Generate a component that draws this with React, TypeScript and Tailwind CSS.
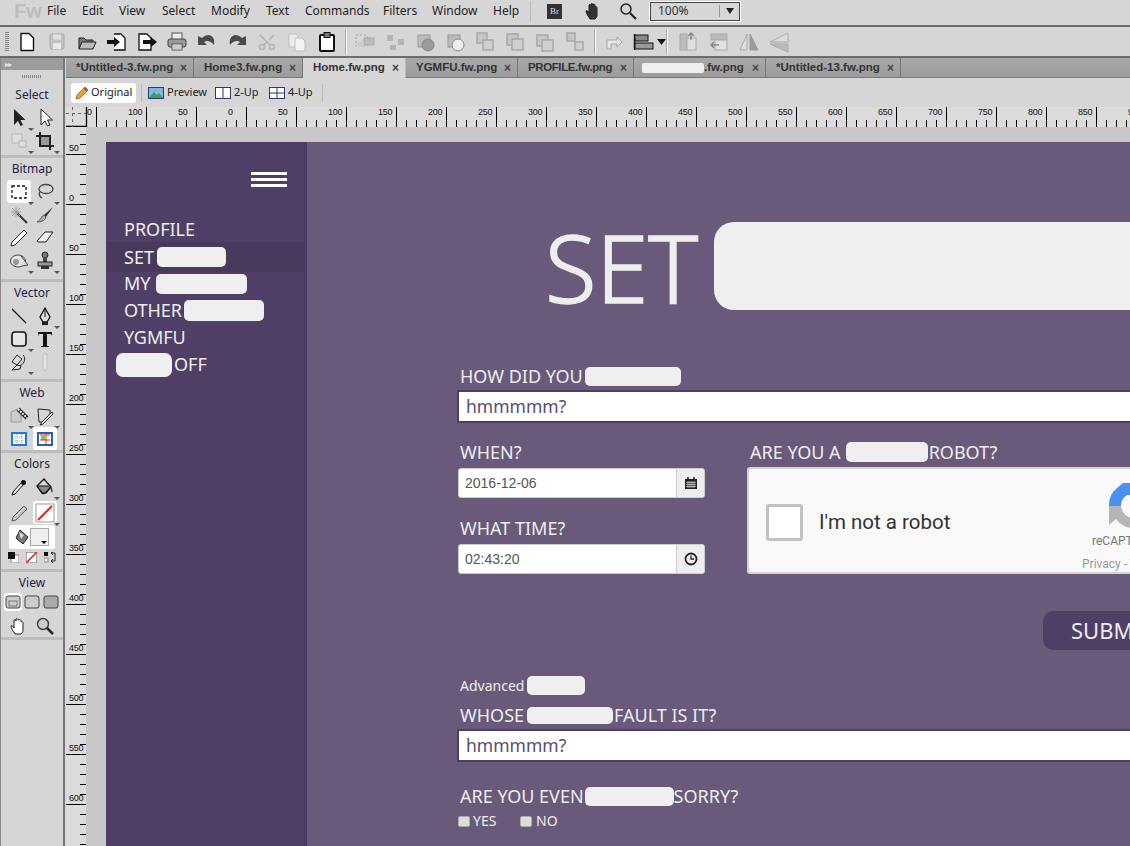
import React from "react";
import { Scissors } from "lucide-react";

const ui = "font-['Noto_Sans','Open_Sans',sans-serif]";

type P = { children: React.ReactNode; s?: number; vb?: number };
const Svg = ({ children, s = 24, vb = 24 }: P) => (
  <svg width={s} height={s} viewBox={`0 0 ${vb} ${vb}`} className="block shrink-0">{children}</svg>
);

const Page = ({ fill = "#fff", stroke = "#111" }: { fill?: string; stroke?: string }) => (
  <path d="M6 3.500h8l4.500 4.500v12.500h-12.500z" fill={fill} stroke={stroke} strokeWidth="1.400" strokeLinejoin="round" />
);
const Ov = ({ a, b, c = "#a8a8a8", f1 = "#c6c6c6", f2 = "#d0d0d0" }: { a: number[]; b: number[]; c?: string; f1?: string; f2?: string }) => (
  <Svg>
    <rect x={a[0]} y={a[1]} width={a[2]} height={a[2]} fill={f1} stroke={c} strokeWidth="1.500" />
    <rect x={b[0]} y={b[1]} width={b[2]} height={b[2]} fill={f2} stroke={c} strokeWidth="1.500" />
  </Svg>
);

const toolbarIcons: (React.ReactNode | number)[] = [
  <Svg><Page /></Svg>,
  <Svg><rect x="5" y="4" width="14" height="15" rx="1.500" fill="#c2c2c2" stroke="#aaa" /><rect x="8" y="4.500" width="8" height="5" fill="#e2e2e2" /><rect x="8" y="13" width="8" height="6" fill="#e8e8e8" /></Svg>,
  <Svg><path d="M4 19V8h5l2 2h7v3" fill="#777" stroke="#222" /><path d="M4 19l3-7h14l-3 7z" fill="#bcbcbc" stroke="#222" strokeLinejoin="round" /></Svg>,
  <Svg><path d="M9 4h7l4 4v12H9" fill="#fff" stroke="#111" strokeWidth="1.300" /><path d="M2 10h7V7l6 5-6 5v-3H2z" fill="#111" /></Svg>,
  <Svg><path d="M4 4h8l4 4v12H4z" fill="#fff" stroke="#111" strokeWidth="1.300" /><path d="M8 10h8V7l6 5-6 5v-3H8z" fill="#111" /></Svg>,
  <Svg><rect x="7" y="3" width="10" height="7" fill="#eee" stroke="#555" /><rect x="3" y="9" width="18" height="8" rx="2" fill="#9a9a9a" stroke="#444" /><rect x="7" y="14" width="10" height="6" fill="#fff" stroke="#555" /><path d="M8 16h8M8 18h8" stroke="#999" /></Svg>,
  <Svg><path d="M3 6v9h9l-3-3c3-2 7-1 10 3 1-6-1-9-5-10-3 0-5 1-7 3z" fill="#4a4a4a" /></Svg>,
  <Svg><path d="M21 6v9h-9l3-3c-3-2-7-1-10 3-1-6 1-9 5-10 3 0 5 1 7 3z" fill="#4a4a4a" /></Svg>,
  <Scissors size={20} color="#b5b5b5" strokeWidth={2} className="rotate-[-90deg]" />,
  <Svg><path d="M4 4h7l2 2v11H4z" fill="#ededed" stroke="#bbb" /><path d="M10 8h7l3 3v10H10z" fill="#f3f3f3" stroke="#bbb" /></Svg>,
  <Svg><rect x="5" y="5" width="14" height="16" rx="1" fill="#fff" stroke="#111" strokeWidth="2" /><rect x="9" y="2.500" width="6" height="5" fill="#777" stroke="#111" /></Svg>,
  8,
  <Svg><rect x="3" y="5" width="11" height="11" fill="none" stroke="#aaa" strokeDasharray="2 2" /><rect x="11" y="8" width="10" height="7" fill="#bbb" stroke="#aaa" /><rect x="5" y="12" width="6" height="5" fill="#ccc" /></Svg>,
  <Svg><rect x="4" y="5" width="6" height="6" fill="#b5b5b5" /><rect x="15" y="9" width="6" height="6" fill="#b5b5b5" /><rect x="7" y="15" width="6" height="5" fill="#b5b5b5" /></Svg>,
  <Svg><rect x="5" y="5" width="12" height="12" fill="#bbb" stroke="#999" /><circle cx="15" cy="15" r="6" fill="#9a9a9a" stroke="#888" /></Svg>,
  <Svg><rect x="5" y="5" width="12" height="12" fill="#bbb" stroke="#999" /><circle cx="15" cy="15" r="6" fill="#eee" stroke="#888" /></Svg>,
  <Ov a={[4, 3, 10]} b={[10, 10, 10]} />,
  <Ov a={[4, 4, 11]} b={[9, 9, 11]} />,
  <Ov a={[4, 5, 11]} b={[9, 10, 11]} />,
  <Ov a={[4, 3, 8]} b={[12, 12, 8]} />,
  9,
  <Svg><path d="M6 10h9V7l5 5-5 5v-3H9v5H5v-9z" fill="#e6e6e6" stroke="#a5a5a5" /></Svg>,
  <div className="relative left-[5px] flex items-center"><Svg><path d="M1.500 4v16" stroke="#111" strokeWidth="1.500" /><rect x="2" y="5" width="13" height="6" fill="#888" stroke="#111" /><rect x="2" y="13" width="18" height="6" fill="#999" stroke="#111" /></Svg><svg width="9" height="6" viewBox="0 0 9 6" className="shrink-0"><path d="M0 0h9L4.500 6z" fill="#111" /></svg></div>,
  15,
  <Svg><rect x="3" y="4" width="7" height="16" fill="#bbb" stroke="#aaa" /><rect x="10" y="8" width="9" height="12" fill="#e0e0e0" stroke="#aaa" /><path d="M14 10V3m-3 3l3-3 3 3" fill="none" stroke="#888" strokeWidth="1.500" /></Svg>,
  <Svg><rect x="4" y="4" width="16" height="6" fill="#bbb" stroke="#aaa" /><rect x="8" y="10" width="12" height="10" fill="#e0e0e0" stroke="#aaa" /><path d="M12 15H4m3-3l-3 3 3 3" fill="none" stroke="#888" strokeWidth="1.500" /></Svg>,
  <Svg><path d="M10 4v16H3z" fill="#ddd" stroke="#aaa" /><path d="M13 4v16h8z" fill="#999" stroke="#999" /></Svg>,
  <Svg><path d="M21 3v9H3z" fill="#ddd" stroke="#aaa" /><path d="M21 14v8L3 14z" fill="#bbb" stroke="#aaa" /></Svg>,
];

const Caret = () => (
  <span className="absolute right-[-3px] bottom-[-2px] w-0 h-0 border-l-[3px] border-r-[3px] border-t-[3px] border-l-transparent border-r-transparent border-t-[#555]" />
);

const T = ({ children, caret, on, className = "" }: { children: React.ReactNode; caret?: boolean; on?: boolean; className?: string }) => (
  <div className={`relative w-[24px] h-[23px] flex items-center justify-center rounded-[3px] ${on ? "bg-white" : ""} ${className}`}>
    <svg width="20" height="20" viewBox="0 0 20 20" className="block">{children}</svg>
    {caret && <Caret />}
  </div>
);

const Section = ({ title, h, children }: { title: string; h: number; children: React.ReactNode }) => (
  <div style={{ height: h }} className="border-b-[3px] border-[#bdbdbd] flex flex-col items-center">
    <div className={`h-[22px] leading-[22px] text-[12px] text-[#1c2340] ${ui}`}>{title}</div>
    <div className="grid grid-cols-[26px_26px] gap-x-0 justify-items-center">{children}</div>
  </div>
);

const ViewBtn = ({ fill, on, children }: { fill: string; on?: boolean; children?: React.ReactNode }) => (
  <div className={`w-[18px] h-[18px] flex items-center justify-center rounded-[3px] ${on ? "bg-white" : ""}`}>
    <svg width="16" height="14" viewBox="0 0 16 14" className="block">
      <rect x="1" y="1" width="14" height="12" rx="2" fill={fill} stroke="#444" />
      {children}
    </svg>
  </div>
);

const LeftPanel = () => (
  <div className="w-[66px] shrink-0 flex bg-[#d6d6d6]">
    <div className="w-[1px] bg-[#8a8a8a]" />
    <div className="flex-1 flex flex-col min-w-0">
      <div className="h-[12px] bg-[#9c9c9c] text-[#e4e4e4] text-[8px] leading-[11px] pl-[4px] tracking-[-1px]">▸▸</div>
      <div className="h-[88px] border-b-[3px] border-[#bdbdbd] flex flex-col items-center">
        <div className="mt-[5px] w-[20px] h-[3px] bg-[repeating-linear-gradient(90deg,#888_0_1px,transparent_1px_2px)]" />
        <div className={`mt-[6px] h-[22px] leading-[22px] text-[12px] text-[#1c2340] ${ui}`}>Select</div>
        <div className="grid grid-cols-[26px_26px] justify-items-center">
          <T caret><path d="M5 1v16l4-4 2.500 5 2.500-1-2.500-5h5z" fill="#222" /></T>
          <T><path d="M6 1v16l4-4 2.500 5 2.500-1-2.500-5h5z" fill="#fff" stroke="#222" /></T>
          <T caret><rect x="3" y="3" width="10" height="9" fill="#ddd" stroke="#b5b5b5" /><rect x="10" y="10" width="7" height="6" fill="#ddd" stroke="#b5b5b5" /></T>
          <T caret><path d="M5 1v14h14M1 5h14v14" fill="none" stroke="#222" strokeWidth="2" /><path d="M5 15L15 5" stroke="#222" /><rect x="6" y="6" width="8" height="8" fill="#999" /></T>
        </div>
      </div>
      <Section title="Bitmap" h={124}>
        <T caret on><rect x="3" y="4" width="14" height="12" fill="none" stroke="#111" strokeWidth="1.300" strokeDasharray="3 2" /></T>
        <T caret><ellipse cx="11" cy="7" rx="7" ry="4.500" fill="none" stroke="#444" strokeWidth="1.300" /><path d="M5 10c-2 2 0 5 2 6" fill="none" stroke="#444" strokeWidth="1.300" /></T>
        <T><path d="M8 8l10 10" stroke="#333" strokeWidth="2" /><path d="M7 2v10M2 7h10M3 3l8 8M11 3l-8 8" stroke="#999" /></T>
        <T><path d="M18 2L9 10l2 2z" fill="#333" /><path d="M9 10c-3 1-2 4-7 7 4 0 8-1 9-5z" fill="#aaa" stroke="#333" strokeWidth=".7" /></T>
        <T><path d="M15 2l3 3L6 17l-4 1 1-4z" fill="#fff" stroke="#222" /></T>
        <T><path d="M2 13L10 4h8l-7 10H3z" fill="#eee" stroke="#222" /></T>
        <T caret><ellipse cx="9" cy="10" rx="7.500" ry="6" fill="#e8e8e8" stroke="#444" /><circle cx="7" cy="11" r="3" fill="#999" /><path d="M12 5l7 9-6 1" fill="#ddd" stroke="#444" /></T>
        <T caret><circle cx="10" cy="4" r="3" fill="#777" stroke="#222" /><rect x="8" y="6" width="4" height="5" fill="#444" /><rect x="3" y="11" width="14" height="4" fill="#999" stroke="#222" /><rect x="6" y="15" width="8" height="3" fill="#333" /></T>
      </Section>
      <Section title="Vector" h={100}>
        <T><path d="M3 3l14 14" stroke="#111" strokeWidth="1.300" /></T>
        <T caret><path d="M10 2l5 9-3 5H8l-3-5z" fill="#ddd" stroke="#111" strokeWidth="1.300" /><path d="M10 2v9" stroke="#111" /><rect x="7" y="16" width="6" height="3" fill="#222" /></T>
        <T caret><rect x="3" y="3" width="14" height="14" rx="3" fill="#e6e6e6" stroke="#111" strokeWidth="1.600" /></T>
        <T><path d="M3 3h14v4l-1-2h-4v12h2v1H6v-1h2V5H4L3 7z" fill="#111" /></T>
        <T caret><path d="M8 3l5 4-5 6-5-3zM8 13l4 1-1 3-8 1z" fill="#ddd" stroke="#222" /><path d="M14 3c3 3 2 8-3 11" fill="none" stroke="#222" /></T>
        <T><path d="M8 2h4v14l-2 3-2-3z" fill="#e3e3e3" stroke="#c0c0c0" /></T>
      </Section>
      <Section title="Web" h={71}>
        <T caret><path d="M2 16V6l7-3 3 3v10z" fill="#ccc" stroke="#999" /><path d="M9 3l9 9" stroke="#222" strokeWidth="4" /><path d="M9 3l9 9" stroke="#fff" strokeWidth="2" strokeDasharray="2 1" /></T>
        <T caret><path d="M3 3l12 1v5M3 3l1 13h5" fill="none" stroke="#222" /><path d="M17 6L7 16l-2 3 3-1L18 8z" fill="#eee" stroke="#222" /></T>
        <T><rect x="3" y="4" width="14" height="12" fill="#fff" stroke="#1e78e0" strokeWidth="2" /><path d="M6 8h8M6 12h8M8 5v10M13 5v10" stroke="#999" strokeDasharray="1 1" /></T>
        <T on><rect x="3" y="4" width="14" height="12" fill="#fff" stroke="#2a5fb0" strokeWidth="2" /><rect x="6" y="7" width="4" height="4" fill="#6fd04a" /><path d="M5 6h10M5 11h10M11 5v10" stroke="#e03020" /></T>
      </Section>
      <Section title="Colors" h={119}>
        <T><path d="M14 3l3 3-3 2-8 9-3 1 1-3 8-9z" fill="#eee" stroke="#111" /><circle cx="14.500" cy="5.500" r="2.500" fill="#111" /></T>
        <T caret><path d="M2 9l7-7 7 8-5 6c-2 1-3 1-4 0z" fill="#d8d8d8" stroke="#111" strokeWidth="1.300" /><path d="M2 9h14l-5 6c-2 1-3 1-4 0z" fill="#8a8a8a" stroke="#111" /><path d="M16 10c2 2 2 4 1 6-1-2-2-4-1-6z" fill="#444" /></T>
        <T className="mt-[3px]"><path d="M15 3l3 3L7 17l-4 1 1-4z" fill="#c8c8c8" stroke="#555" /></T>
        <T caret on className="mt-[3px]"><rect x="1" y="1" width="18" height="18" fill="#fff" stroke="#999" /><path d="M3 17L17 3" stroke="#e11" strokeWidth="1.800" /></T>
        <div className="col-span-2 mt-[1px] w-[46px] h-[24px] bg-white rounded-[3px] flex items-center justify-between px-[6px]">
          <svg width="14" height="16" viewBox="0 0 14 16" className="block"><path d="M5 1l8 7-5 7-7-6z" fill="#777" stroke="#222" /><path d="M4 3l5 3-3 4z" fill="#ddd" /></svg>
          <div className="relative w-[19px] h-[18px] bg-[#efefef] border border-[#aaa]"><span className="absolute right-[1px] bottom-[1px] w-0 h-0 border-l-[3px] border-r-[3px] border-t-[3px] border-l-transparent border-r-transparent border-t-black" /></div>
        </div>
        <div className="col-span-2 mt-[3px] flex gap-[7px] items-center">
          <svg width="11" height="11" viewBox="0 0 11 11" className="block"><rect x="3" y="3" width="8" height="8" fill="#fff" stroke="#888" /><rect width="7" height="7" fill="#111" /></svg>
          <svg width="11" height="11" viewBox="0 0 11 11" className="block"><rect width="11" height="11" fill="#fff" stroke="#555" /><path d="M0 11L11 0" stroke="#e11" strokeWidth="1.500" /></svg>
          <svg width="12" height="11" viewBox="0 0 12 11" className="block"><rect width="4" height="4" fill="#111" /><rect y="6" width="4" height="4" fill="#fff" stroke="#888" /><path d="M7 1h4v8H7M9 0L7 1l2 2M9 7l-2 2 2 2" fill="none" stroke="#222" /></svg>
        </div>
      </Section>
      <Section title="View" h={68}>
        <div className="col-span-2 flex gap-[1px] w-[56px] mt-[-1px] mb-[3px]">
          <ViewBtn fill="#ccc" on><rect x="4" y="6" width="8" height="5" fill="none" stroke="#777" /></ViewBtn>
          <ViewBtn fill="#ccc" />
          <ViewBtn fill="#aaa" />
        </div>
        <T><path d="M6 18c-2-3-4-6-4-8 1-1 2 0 3 2V4c1-1 2 0 2 1V3c1-1 2 0 2 1l1 0c1-1 2 0 2 1v1c1-1 2 0 2 1v7c0 2-1 3-2 4z" fill="#fff" stroke="#222" /></T>
        <T><circle cx="8" cy="8" r="5.500" fill="#ccc" stroke="#444" strokeWidth="1.500" /><path d="M12 12l6 6" stroke="#222" strokeWidth="2.500" /></T>
      </Section>
    </div>
    <div className="w-[2px] bg-[#777]" />
    <div className="w-[1px] bg-[#d6d6d6]" />
  </div>
);

const menus: [string, number][] = [["File", 35], ["Edit", 37], ["View", 43], ["Select", 49], ["Modify", 55], ["Text", 39], ["Commands", 78], ["Filters", 49], ["Window", 61], ["Help", 37]];

const MenuBar = () => (
  <div className={`h-[27px] shrink-0 border-b-2 border-[#6c6c6c] flex items-center pb-[3px] ${ui} text-[12px] text-[#222]`}>
    <div className="w-[47px] pl-[14px] text-[20px] font-bold leading-[24px] text-[#bdbdbd] font-['Liberation_Sans',sans-serif]">Fw</div>
    {menus.map(([m, w]) => (
      <div key={m} style={{ width: w }} className="leading-[22px] h-[22px]">{m}</div>
    ))}
    <div className="w-[1px] h-[20px] bg-[#bbb]" />
    <div className="ml-[16px] w-[15px] h-[15px] bg-[#333] text-[#ddd] text-[9px] leading-[15px] text-center font-['Liberation_Serif',serif]">Br</div>
    <div className="ml-[22px]">
      <Svg s={20} vb={20}><path d="M6 18c-2-3-4-6-4-8 1-1 2 0 3 2V4c1-1 2 0 2 1V3c1-1 2 0 2 1v-.5c1-1 2 0 2 1V6c1-1 2 0 2 1v7c0 2-1 3-2 4z" fill="#333" stroke="#222" /></Svg>
    </div>
    <div className="ml-[15px]">
      <Svg s={18} vb={18}><circle cx="7" cy="7" r="5" fill="none" stroke="#222" strokeWidth="1.500" /><path d="M11 11l6 6" stroke="#222" strokeWidth="2.200" /></Svg>
    </div>
    <div className="ml-[12px] w-[92px] h-[21px] border border-white outline-1 outline-[#444] outline-offset-[-2px] flex items-center pl-[8px] text-[#333]">
      <span className="flex-1 text-[12px]">100%</span>
      <span className="w-[1px] h-[12px] bg-[#999]" />
      <span className="mx-[6px] w-0 h-0 border-l-[4px] border-r-[4px] border-t-[6px] border-l-transparent border-r-transparent border-t-[#222]" />
    </div>
  </div>
);

const Toolbar = () => (
  <div className="h-[31px] shrink-0 border-b-2 border-[#6c6c6c] flex items-center pl-[5px]">
    <div className="w-[4px] h-[20px] mr-[3px] bg-[repeating-linear-gradient(180deg,#888_0_1px,transparent_1px_2px)]" />
    {toolbarIcons.map((ic, i) =>
      typeof ic === "number" ? (
        <div key={i} style={{ width: ic }} className="flex justify-center"><div className="w-[2px] h-[26px] bg-[#aaa] border-r border-white" /></div>
      ) : (
        <div key={i} className="w-[30px] h-[26px] flex items-center justify-center">{ic}</div>
      )
    )}
  </div>
);

const tabs: [string, number, boolean?, number?][] = [
  ["*Untitled-3.fw.png", 128], ["Home3.fw.png", 109], ["Home.fw.png", 103, true], ["YGMFU.fw.png", 112], ["PROFILE.fw.png", 116], [".fw.png", 132, false, 61], ["*Untitled-13.fw.png", 135],
];

const Tabs = () => (
  <div className="h-[20px] shrink-0 flex bg-[linear-gradient(#a8a8a8,#9c9c9c)] border-b border-[#777] font-['Liberation_Sans',sans-serif] text-[11.500px] text-[#333] font-bold">
    {tabs.map(([t, w, active, red]) => (
      <div key={t} style={{ width: w }} className={`shrink-0 flex items-center pl-[10px] pr-[6px] border-r border-[#777] ${active ? "bg-[#d6d6d6] border-r-[#bbb] h-[20px]" : ""}`}>
        {red ? <span className="w-[62px] h-[10px] bg-[#efefef] rounded-[2px] ml-[-2px] shrink-0" /> : null}
        <span className={`flex-1 whitespace-nowrap ${t === "PROFILE.fw.png" ? "tracking-[-0.400px]" : ""}`}>{t}</span>
        <span className="text-[12px] text-[#444]">×</span>
      </div>
    ))}
  </div>
);

const PreviewBar = () => (
  <div className={`h-[29px] shrink-0 flex items-center pl-[5px] ${ui} text-[11px] text-[#222]`}>
    <div className="w-[65px] h-[20px] bg-white rounded-[3px] flex items-center pl-[4px] gap-[2px]">
      <svg width="14" height="14" viewBox="0 0 14 14" className="block shrink-0"><path d="M10 1l3 3-8 8-4 1 1-4z" fill="#f0a030" stroke="#8a5a10" strokeWidth=".8" /><path d="M10 1l3 3-1.500 1.500-3-3z" fill="#d04040" /></svg>
      <span>Original</span>
    </div>
    <div className="w-[1px] h-[18px] bg-[#bbb] ml-[5px] mr-[6px]" />
    <svg width="16" height="12" viewBox="0 0 16 12" className="block shrink-0 mr-[3px]"><rect x=".5" y=".5" width="15" height="11" fill="#7fb6e6" stroke="#2a3a70" /><path d="M1 11l5-6 3 3 2-2 4 5z" fill="#3ea04a" /></svg>
    <span className="w-[48px]">Preview</span>
    <svg width="16" height="12" viewBox="0 0 16 12" className="block shrink-0 mr-[3px]"><rect x=".5" y=".5" width="15" height="11" fill="#fff" stroke="#2a3a70" /><path d="M8 0v12" stroke="#2a3a70" /></svg>
    <span className="w-[35px]">2-Up</span>
    <svg width="16" height="12" viewBox="0 0 16 12" className="block shrink-0 mr-[3px]"><rect x=".5" y=".5" width="15" height="11" fill="#fff" stroke="#2a3a70" /><path d="M8 0v12M0 6h16" stroke="#2a3a70" /></svg>
    <span className="w-[34px]">4-Up</span>
    <div className="w-[1px] h-[18px] bg-[#bbb]" />
  </div>
);

const topLabels = ["100", "50", "0", "50", "100", "150", "200", "250", "300", "350", "400", "450", "500", "550", "600", "650", "700", "750", "800", "850", "900"];
const TopRuler = () => (
  <div className="h-[20px] shrink-0 flex bg-[#dcdcdc]">
    <svg width="1064" height="20" viewBox="0 0 1064 20" className="block">
      <path d="M0 19.500h20M20.500 0v20" stroke="#000" strokeWidth="1.300" />
      <path d="M0 6.500h20M6.500 0v20" stroke="#666" strokeDasharray="3 3" />
      {Array.from({ length: 110 }, (_, i) => 20 + i * 10).map((x, i) => (
        <path key={x} d={i % 5 === 1 ? `M${x + 0.5} 0v20` : `M${x + 0.5} 13v7`} stroke="#000" />
      ))}
      <text x="21" y="8" fontSize="9" fill="#111" fontFamily="Liberation Sans">0</text>
      {topLabels.map((l, i) => (
        <text key={i} x={62 + i * 50} y="8" fontSize="9" fill="#111" fontFamily="Liberation Sans" letterSpacing="-0.300">{l}</text>
      ))}
    </svg>
  </div>
);

const leftLabels = ["50", "0", "50", "100", "150", "200", "250", "300", "350", "400", "450", "500", "550", "600"];
const LeftRuler = () => (
  <div className="w-[20px] shrink-0 bg-[#dcdcdc]">
    <svg width="20" height="720" viewBox="0 0 20 720" className="block">
      {Array.from({ length: 72 }, (_, i) => 7 + i * 10).map((y, i) => (
        <path key={y} d={i % 5 === 2 ? `M0 ${y + 0.5}h20` : `M14 ${y + 0.5}h6`} stroke="#000" />
      ))}
      {leftLabels.map((l, i) => (
        <text key={i} x="3" y={24 + i * 50} fontSize="9" fill="#111" fontFamily="Liberation Sans" letterSpacing="-0.300">{l}</text>
      ))}
    </svg>
  </div>
);

const Red = ({ w, h = 19, className = "" }: { w: number; h?: number; className?: string }) => (
  <span style={{ width: w, height: h }} className={`inline-block shrink-0 bg-[#efefef] rounded-[5px] ${className}`} />
);

const Label = ({ children, className = "" }: { children: React.ReactNode; className?: string }) => (
  <div className={`h-[22px] flex items-center pl-[3px] text-[18px] leading-[22px] text-[#eee] whitespace-nowrap ${className}`}>{children}</div>
);

const TextInput = () => (
  <div className="h-[33px] w-[800px] bg-white border-2 border-[#4f3f66] pl-[7px] text-[17.500px] leading-[29px] text-[#5b4b72]">hmmmmm?</div>
);

const Addon = ({ value, icon }: { value: string; icon: React.ReactNode }) => (
  <div className="h-[30px] w-[247px] flex bg-white border border-[#ccc] rounded-[3px] font-['Liberation_Sans',sans-serif] text-[14px] text-[#555] overflow-hidden">
    <div className="flex-1 pl-[6px] leading-[28px]">{value}</div>
    <div className="w-[28px] bg-[#eee] border-l border-[#ccc] flex items-center justify-center">{icon}</div>
  </div>
);

const Sidebar = () => (
  <div className="w-[201px] shrink-0 bg-[#4f3f66] border-r-[3px] border-[#4a3b60] text-[18px] leading-[27px] text-[#eee]">
    <div className="h-[73px] pt-[30px] pl-[145px] flex flex-col gap-[3px]">
      <div className="w-[36px] h-[3px] bg-white" />
      <div className="w-[36px] h-[3px] bg-white" />
      <div className="w-[36px] h-[3px] bg-white" />
    </div>
    <div className="h-[27px] pl-[18px] pt-[2px] flex items-center">PROFILE</div>
    <div className="h-[30px] pl-[18px] flex items-center bg-[#49395d] gap-[3px]">SET<Red w={69} h={20} /></div>
    <div className="h-[27px] pl-[18px] flex items-center gap-[5px] mt-[-2px]">MY<Red w={91} h={20} /></div>
    <div className="h-[27px] pl-[18px] flex items-center gap-[2px]">OTHER<Red w={80} h={21} /></div>
    <div className="h-[27px] pl-[18px] flex items-center">YGMFU</div>
    <div className="h-[27px] pl-[10px] flex items-center gap-[2px]"><Red w={56} h={24} className="rounded-[7px]" />OFF</div>
  </div>
);

const Recaptcha = () => (
  <div className="w-[470px] h-[107px] bg-[#f9f9f9] border-2 border-[#d3d3d3] rounded-[3px] flex items-center mt-[-1px]">
    <div className="ml-[17px] mt-[4px] w-[37px] h-[37px] bg-white border-[3px] border-[#c1c1c1] rounded-[3px]" />
    <span className="ml-[16px] mt-[4px] w-[288px] font-['Roboto',sans-serif] text-[20.500px] text-[#333]">I'm not a robot</span>
    <div className="flex flex-col ml-[-25px] items-start self-start pt-[14px]">
      <svg width="60" height="46" viewBox="0 0 60 46" className="block ml-[26px] mb-[4px]">
        <path d="M1 23A22 22 0 0 1 9 5L15 0h10v12H19a13 13 0 0 0-6 11z" fill="#4a90f0" />
        <rect x="22" y="0" width="6" height="13" fill="#1f50c8" />
        <path d="M1 23h12a13 13 0 0 0 14 12v10A23 23 0 0 1 8 36l-7 6V27z" fill="#b5b5b5" />
      </svg>
      <div className="ml-[10px] font-['Roboto',sans-serif] text-[12px] leading-[16px] text-[#777] whitespace-nowrap">reCAPTCHA</div>
      <div className="font-['Roboto',sans-serif] text-[12px] leading-[16px] mt-[7px] text-[#999] whitespace-nowrap">Privacy - Terms</div>
    </div>
  </div>
);

const Clock = () => (
  <svg width="14" height="14" viewBox="0 0 14 14" className="block"><circle cx="7" cy="7" r="5.500" fill="none" stroke="#222" strokeWidth="1.800" /><path d="M7 3.500V7h3" fill="none" stroke="#222" strokeWidth="1.300" /></svg>
);
const Cal = () => (
  <svg width="12" height="12" viewBox="0 0 12 12" className="block"><path d="M0 2h12v10H0z" fill="#222" /><path d="M3 0v3M9 0v3" stroke="#222" strokeWidth="1.500" /><path d="M1 5.500h10M1 7.500h10M1 9.500h10M3 4v7M5 4v7M7 4v7M9 4v7" stroke="#eee" strokeWidth=".6" /></svg>
);

const Main = () => (
  <div className="flex-1 bg-[#695a7c] pl-[150px] pt-[80px] text-[#eee]">
    <div className="flex items-start pl-[88px] h-[88px]">
      <span className="font-light text-[94px] leading-[90px] text-[#eee] [-webkit-text-stroke:1.500px_#eee]">SET</span>
      <span className="ml-[16px] w-[500px] h-[88px] bg-[#efefef] rounded-[20px] shrink-0" />
    </div>
    <Label className="mt-[55px]">HOW DID YOU<span className="w-[2px]" /><Red w={96} /></Label>
    <div className="mt-[3px]"><TextInput /></div>
    <div className="flex mt-[18px]">
      <div className="w-[290px] shrink-0">
        <Label>WHEN?</Label>
        <div className="mt-[5px] ml-[1px]"><Addon value="2016-12-06" icon={<Cal />} /></div>
        <Label className="mt-[19px]">WHAT TIME?</Label>
        <div className="mt-[5px] ml-[1px]"><Addon value="02:43:20" icon={<Clock />} /></div>
      </div>
      <div>
        <Label>ARE YOU A<span className="w-[5px]" /><Red w={82} h={20} /><span className="w-[1px]" />ROBOT?</Label>
        <div className="mt-[5px]"><Recaptcha /></div>
      </div>
    </div>
    <div className="mt-[37px] ml-[586px] w-[200px] h-[39px] bg-[#4f3f66] rounded-[10px] pl-[28px] text-[22px] leading-[39px] text-[#eee] whitespace-nowrap">SUBMIT</div>
    <div className="mt-[24px] h-[22px] pl-[3px] flex items-center text-[14px] text-[#eee]">Advanced<span className="w-[3px]" /><Red w={58} /></div>
    <Label className="mt-[8px]">WHOSE<span className="w-[3px]" /><Red w={86} h={17} /><span className="w-[1px]" />FAULT IS IT?</Label>
    <div className="mt-[3px]"><TextInput /></div>
    <Label className="mt-[23px]">ARE YOU EVEN<span className="w-[1px]" /><Red w={89} />SORRY?</Label>
    <div className="flex items-center text-[14px] leading-[20px] mt-[4px] pl-[1px]">
      <span className="w-[12px] h-[11px] bg-[#ddd] rounded-[2px] border border-[#aaa]" />
      <span className="ml-[3px] w-[47px]">YES</span>
      <span className="w-[12px] h-[11px] bg-[#ddd] rounded-[2px] border border-[#aaa]" />
      <span className="ml-[4px]">NO</span>
    </div>
  </div>
);

export default function App() {
  return (
    <div className="w-[1130px] h-[846px] overflow-hidden flex flex-col bg-[#d6d6d6]">
      <MenuBar />
      <Toolbar />
      <div className="flex-1 flex min-h-0">
        <LeftPanel />
        <div className="flex-1 min-w-0 flex flex-col overflow-hidden">
          <Tabs />
          <PreviewBar />
          <TopRuler />
          <div className="flex-1 flex min-h-0 overflow-hidden">
            <LeftRuler />
            <div className="flex-1 min-w-0 bg-[#c8c8c8] pl-[20px] pt-[15px] overflow-hidden">
              <div className={`flex w-[1150px] h-[720px] ${ui}`}>
                <Sidebar />
                <Main />
              </div>
            </div>
          </div>
        </div>
      </div>
    </div>
  );
}
